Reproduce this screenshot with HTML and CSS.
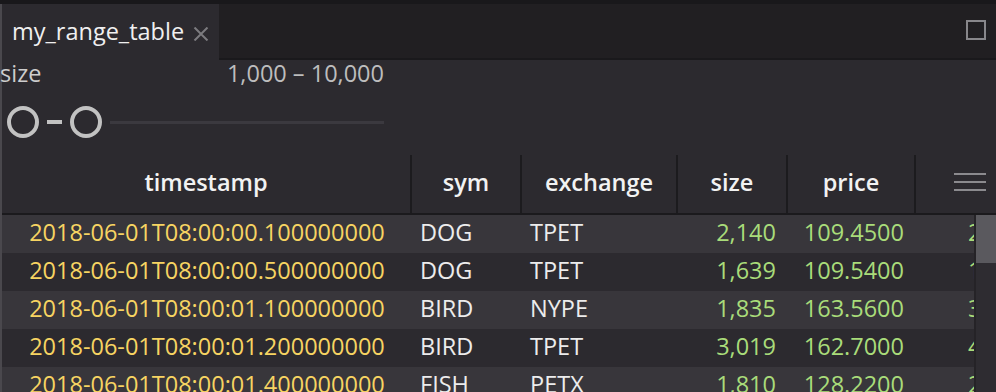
FILE: index.html
```html
<!DOCTYPE html>
<html>
<head>
<meta charset="utf-8">
<link rel="stylesheet" href="styles.css">
</head>
<body>
<div class="app">
  <div class="topstrip"></div>
  <div class="panel">
    <div class="tabbar">
      <div class="tab">
        <span class="tab-title">my_range_table</span>
        <svg class="tab-close" width="16" height="14" viewBox="0 0 16 14"><path d="M1.5 0.5 L14.5 13.5 M14.5 0.5 L1.5 13.5" stroke="#7c7b7f" stroke-width="2" fill="none"/></svg>
      </div>
      <div class="tabbar-fill"></div>
      <svg class="maximize" width="20" height="20" viewBox="0 0 20 20"><rect x="1" y="1" width="18" height="18" fill="none" stroke="#88878b" stroke-width="2"/></svg>
    </div>
    <div class="content">
      <div class="controls">
        <div class="label-row">
          <span class="label">size</span>
          <span class="range-value">1,000 – 10,000</span>
        </div>
        <div class="slider">
          <span class="thumb"></span>
          <span class="dash"></span>
          <span class="thumb"></span>
          <span class="track"></span>
        </div>
      </div>
      <div class="grid">
        <div class="header">
          <div class="hcell">timestamp</div>
          <div class="hcell">sym</div>
          <div class="hcell">exchange</div>
          <div class="hcell">size</div>
          <div class="hcell">price</div>
          <div class="hcell last">
            <svg width="32" height="20" viewBox="0 0 32 20"><path d="M0 2 H32 M0 10 H32 M0 18 H32" stroke="#8b8a8e" stroke-width="2"/></svg>
          </div>
        </div>
        <div class="body">
          <div class="rows">
            <div class="row odd">
              <div class="cell date">2018-06-01T08:00:00.100000000</div>
              <div class="cell text">DOG</div>
              <div class="cell text">TPET</div>
              <div class="cell num">2,140</div>
              <div class="cell num">109.4500</div>
              <div class="cell num clip">234,223.0000</div>
            </div>
            <div class="row">
              <div class="cell date">2018-06-01T08:00:00.500000000</div>
              <div class="cell text">DOG</div>
              <div class="cell text">TPET</div>
              <div class="cell num">1,639</div>
              <div class="cell num">109.5400</div>
              <div class="cell num clip">179,536.0600</div>
            </div>
            <div class="row odd">
              <div class="cell date">2018-06-01T08:00:01.100000000</div>
              <div class="cell text">BIRD</div>
              <div class="cell text">NYPE</div>
              <div class="cell num">1,835</div>
              <div class="cell num">163.5600</div>
              <div class="cell num clip">300,132.6000</div>
            </div>
            <div class="row">
              <div class="cell date">2018-06-01T08:00:01.200000000</div>
              <div class="cell text">BIRD</div>
              <div class="cell text">TPET</div>
              <div class="cell num">3,019</div>
              <div class="cell num">162.7000</div>
              <div class="cell num clip">491,191.3000</div>
            </div>
            <div class="row odd">
              <div class="cell date">2018-06-01T08:00:01.400000000</div>
              <div class="cell text">FISH</div>
              <div class="cell text">PETX</div>
              <div class="cell num">1,810</div>
              <div class="cell num">128.2200</div>
              <div class="cell num clip">232,078.2000</div>
            </div>
          </div>
          <div class="scrollbar"><div class="scroll-thumb"></div></div>
        </div>
      </div>
    </div>
  </div>
</div>
</body>
</html>
```
FILE: styles.css
```css
* { box-sizing: border-box; }
html, body {
  margin: 0;
  padding: 0;
  background: #2c2a2f;
  overflow: hidden;
}
body {
  width: 996px;
  height: 392px;
  font-family: "Open Sans", "Noto Sans", sans-serif;
  font-size: 23.5px;
  color: #ececec;
}
.app {
  width: 996px;
  height: 392px;
  display: flex;
  flex-direction: column;
}
.topstrip {
  height: 4px;
  background: #19181b;
  flex: none;
}
.panel {
  flex: 1;
  display: flex;
  flex-direction: column;
  border-left: 2px solid #4a484d;
  min-height: 0;
}
.tabbar {
  height: 56px;
  flex: none;
  display: flex;
  align-items: center;
  background: #211f22;
  box-shadow: inset 0 -2px 0 #1a191c;
  padding-right: 10px;
}
.tab {
  height: 56px;
  width: 217px;
  background: #2c2a2f;
  display: flex;
  align-items: flex-start;
  padding-left: 10px;
}
.tab-title {
  line-height: 54px;
  color: #f0f0f0;
}
.tab-close {
  margin-top: 23px;
  margin-left: 9px;
}
.tabbar-fill { flex: 1; }
.maximize { margin-top: -4px; }
.content {
  flex: 1;
  display: flex;
  flex-direction: column;
  min-height: 0;
}
.controls {
  width: 382px;
  padding-bottom: 17px;
}
.label-row {
  display: flex;
  justify-content: space-between;
  line-height: 26px;
  height: 26px;
}
.label { color: #cdcdcd; margin-left: -2px; }
.range-value { color: #bdbdbd; }
.slider {
  margin-top: 20px;
  height: 32px;
  display: flex;
  align-items: center;
  padding-left: 5px;
}
.thumb {
  width: 32px;
  height: 32px;
  border-radius: 50%;
  border: 4px solid #c2c2c2;
  flex: none;
}
.dash {
  width: 15px;
  height: 4px;
  background: #c2c2c2;
  margin: 0 8px;
  flex: none;
}
.track {
  flex: 1;
  height: 3px;
  background: #3b393f;
  margin-left: 8px;
}
.grid {
  flex: 1;
  display: flex;
  flex-direction: column;
  min-height: 0;
}
.header, .row {
  display: grid;
  grid-template-columns: 410px 110px 156px 110px 128px 1fr;
}
.header {
  height: 60px;
  border-bottom: 2px solid #1b1a1d;
  flex: none;
}
.hcell {
  font-weight: 600;
  color: #f2f2f2;
  text-align: center;
  line-height: 54px;
  padding-bottom: 4px;
  border-right: 2px solid #1c1b1e;
  white-space: nowrap;
}
.hcell.last {
  border-right: none;
  display: flex;
  justify-content: flex-end;
  align-items: flex-start;
  padding: 17px 10px 0 0;
}
.body {
  flex: 1;
  display: flex;
  min-height: 0;
}
.rows {
  width: 972px;
  flex: none;
  overflow: hidden;
}
.row {
  height: 38px;
  background: #2c2a2f;
}
.row.odd { background: #38363b; }
.cell {
  line-height: 35px;
  padding-bottom: 3px;
  white-space: nowrap;
  overflow: hidden;
}
.cell.date { color: #f7d462; text-align: center; }
.cell.text { color: #ececec; padding-left: 8px; }
.cell.num { color: #a9dc7a; text-align: right; padding-right: 12px; }
.cell.clip { text-align: left; padding-left: 52px; padding-right: 0; }
.scrollbar {
  flex: 1;
  background: #2e2c31;
  border-left: 2px solid #252327;
}
.scroll-thumb {
  height: 48px;
  background: #5a595e;
}
```
